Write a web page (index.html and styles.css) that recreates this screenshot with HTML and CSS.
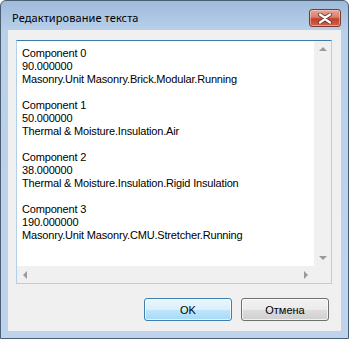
FILE: index.html
```html
<!DOCTYPE html>
<html lang="ru">
<head>
    <meta charset="UTF-8">
    <title>Редактирование текста</title>
    <link rel="stylesheet" href="styles.css">
</head>
<body>

    <div class="window">
        <div class="titlebar">
            <span class="title">Редактирование текста</span>
            <span class="close">
                <svg width="16" height="11" viewBox="0 0 16 11">
                    <path d="M3 1.5 L8 5 L13 1.5 M3 9.5 L8 6 L13 9.5" stroke="#6a3b37" stroke-width="4" fill="none" stroke-linecap="round"/>
                    <path d="M3 1.5 L8 5 L13 1.5 M3 9.5 L8 6 L13 9.5" stroke="#fff" stroke-width="2.2" fill="none" stroke-linecap="round"/>
                </svg>
            </span>
        </div>

        <div class="client">
            <div class="edit">
                <div class="edit_row">
                    <div class="text">
                        <div>Component 0</div>
                        <div>90.000000</div>
                        <div>Masonry.Unit Masonry.Brick.Modular.Running</div>
                        <div>&nbsp;</div>
                        <div>Component 1</div>
                        <div>50.000000</div>
                        <div>Thermal &amp; Moisture.Insulation.Air</div>
                        <div>&nbsp;</div>
                        <div>Component 2</div>
                        <div>38.000000</div>
                        <div>Thermal &amp; Moisture.Insulation.Rigid Insulation</div>
                        <div>&nbsp;</div>
                        <div>Component 3</div>
                        <div>190.000000</div>
                        <div>Masonry.Unit Masonry.CMU.Stretcher.Running</div>
                    </div>
                    <div class="vscroll">
                        <span class="arrow arrow_up"></span>
                        <span class="arrow arrow_down"></span>
                    </div>
                </div>
                <div class="hscroll">
                    <div class="htrack">
                        <span class="arrow arrow_left"></span>
                        <span class="arrow arrow_right"></span>
                    </div>
                    <div class="corner"></div>
                </div>
            </div>

            <div class="buttons">
                <button class="btn btn_default">OK</button>
                <button class="btn">Отмена</button>
            </div>
        </div>
    </div>

</body>
</html>
```

FILE: styles.css
```css
* {
    padding: 0;
    margin: 0;
    box-sizing: border-box;
}
body {
    background-color: #fff;
    font-family: "Liberation Sans", "DejaVu Sans", sans-serif;
}
.window {
    width: 349px;
    height: 339px;
    border: 1px solid #4b5f74;
    border-radius: 6px 6px 0 0;
    background: linear-gradient(to bottom, #9fbbdb 0px, #b9d0ea 30px, #bfd4ec 100%);
    padding: 0 7px 7px 7px;
    display: flex;
    flex-direction: column;
}
.titlebar {
    height: 29px;
    display: flex;
    align-items: flex-start;
}
.title {
    font-family: "Noto Sans", "Open Sans", sans-serif;
    font-size: 11px;
    letter-spacing: 0.1px;
    color: #000;
    padding-top: 9px;
    padding-left: 4px;
    line-height: 15px;
}
.close {
    margin-left: auto;
    margin-top: 8px;
    width: 32px;
    height: 18px;
    border: 1px solid #7a3a33;
    border-radius: 3px;
    background: linear-gradient(to bottom, #e9a595 0%, #d77f6c 45%, #c4412c 55%, #cf6047 100%);
    box-shadow: inset 0 0 0 1px rgba(255, 220, 210, 0.5);
    display: flex;
    align-items: center;
    justify-content: center;
}
.close svg {
    display: block;
}
.client {
    flex: 1;
    background-color: #f0f0f0;
    padding: 10px 9px 0 8px;
    display: flex;
    flex-direction: column;
}
.edit {
    height: 244px;
    border: 1px solid #b5cfe7;
    border-top-color: #3d7bad;
    background-color: #fff;
    display: flex;
    flex-direction: column;
}
.edit_row {
    flex: 1;
    display: flex;
    min-height: 0;
}
.text {
    flex: 1;
    padding: 6px 0 0 5px;
    font-family: "Liberation Sans", "DejaVu Sans", sans-serif;
    font-size: 11px;
    letter-spacing: -0.17px;
    line-height: 13px;
    color: #000;
    white-space: nowrap;
    overflow: hidden;
}
.vscroll {
    width: 17px;
    background-color: #f0f0f0;
    display: flex;
    flex-direction: column;
    justify-content: space-between;
    align-items: center;
    padding: 6px 0;
}
.hscroll {
    height: 17px;
    display: flex;
}
.htrack {
    flex: 1;
    background-color: #f0f0f0;
    display: flex;
    justify-content: space-between;
    align-items: center;
    padding: 0 6px;
}
.corner {
    width: 17px;
    background-color: #f0f0f0;
}
.arrow {
    display: block;
    width: 0;
    height: 0;
}
.arrow_up {
    border-left: 4px solid transparent;
    border-right: 4px solid transparent;
    border-bottom: 4px solid #9a9a9a;
}
.arrow_down {
    border-left: 4px solid transparent;
    border-right: 4px solid transparent;
    border-top: 4px solid #9a9a9a;
}
.arrow_left {
    border-top: 4px solid transparent;
    border-bottom: 4px solid transparent;
    border-right: 4px solid #9a9a9a;
}
.arrow_right {
    border-top: 4px solid transparent;
    border-bottom: 4px solid transparent;
    border-left: 4px solid #9a9a9a;
}
.buttons {
    display: flex;
    justify-content: flex-end;
    gap: 9px;
    margin-top: 14px;
    padding-right: 3px;
}
.btn {
    width: 88px;
    height: 23px;
    border: 1px solid #707070;
    border-radius: 3px;
    background: linear-gradient(to bottom, #f2f2f2 0%, #ebebeb 50%, #dddddd 51%, #cfcfcf 100%);
    box-shadow: inset 0 0 0 1px rgba(255, 255, 255, 0.7);
    font-family: "Liberation Sans", "DejaVu Sans", sans-serif;
    font-size: 11px;
    color: #000;
}
.btn_default {
    border-color: #3c7fb1;
    background: linear-gradient(to bottom, #eaf6fd 0%, #d9f0fc 50%, #bee6fd 51%, #a7d9f5 100%);
}
```
